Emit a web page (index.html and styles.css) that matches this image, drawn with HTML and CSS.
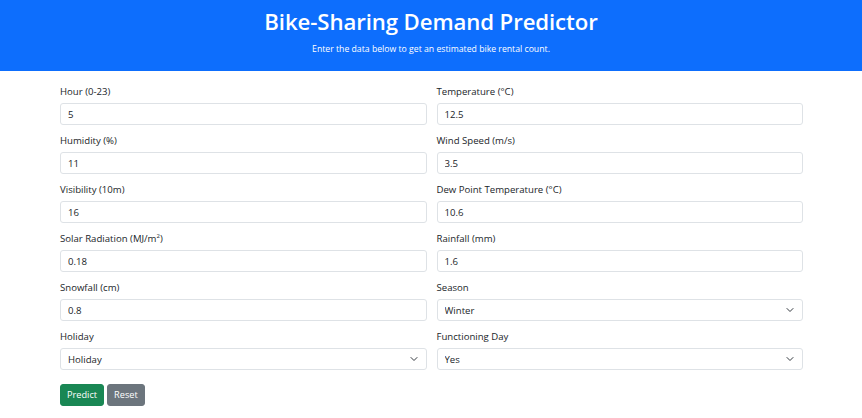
FILE: index.html
```html
<!DOCTYPE html>
<html lang="en">
<head>
<meta charset="utf-8">
<title>Bike-Sharing Demand Predictor</title>
<link rel="stylesheet" href="styles.css">
</head>
<body>
<header class="hero">
  <h1 class="hero-title">Bike-Sharing Demand Predictor</h1>
  <p class="hero-sub">Enter the data below to get an estimated bike rental count.</p>
</header>
<main class="container">
  <form class="form-grid">
    <div class="field"><label class="field-label">Hour (0-23)</label><input class="control" type="text" value="5"></div>
    <div class="field"><label class="field-label">Temperature (°C)</label><input class="control" type="text" value="12.5"></div>
    <div class="field"><label class="field-label">Humidity (%)</label><input class="control" type="text" value="11"></div>
    <div class="field"><label class="field-label">Wind Speed (m/s)</label><input class="control" type="text" value="3.5"></div>
    <div class="field"><label class="field-label">Visibility (10m)</label><input class="control" type="text" value="16"></div>
    <div class="field"><label class="field-label">Dew Point Temperature (°C)</label><input class="control" type="text" value="10.6"></div>
    <div class="field"><label class="field-label">Solar Radiation (MJ/m<sup class="sup">2</sup>)</label><input class="control" type="text" value="0.18"></div>
    <div class="field"><label class="field-label">Rainfall (mm)</label><input class="control" type="text" value="1.6"></div>
    <div class="field"><label class="field-label">Snowfall (cm)</label><input class="control" type="text" value="0.8"></div>
    <div class="field"><label class="field-label">Season</label>
      <div class="select-wrap"><select class="control select"><option>Winter</option><option>Spring</option><option>Summer</option><option>Autumn</option></select>
      <svg class="chev" viewBox="0 0 16 16" width="8" height="8"><path d="M2 5l6 6 6-6" fill="none" stroke="#343a40" stroke-width="2" stroke-linecap="round" stroke-linejoin="round"/></svg></div>
    </div>
    <div class="field"><label class="field-label">Holiday</label>
      <div class="select-wrap"><select class="control select"><option>Holiday</option><option>No Holiday</option></select>
      <svg class="chev" viewBox="0 0 16 16" width="8" height="8"><path d="M2 5l6 6 6-6" fill="none" stroke="#343a40" stroke-width="2" stroke-linecap="round" stroke-linejoin="round"/></svg></div>
    </div>
    <div class="field"><label class="field-label">Functioning Day</label>
      <div class="select-wrap"><select class="control select"><option>Yes</option><option>No</option></select>
      <svg class="chev" viewBox="0 0 16 16" width="8" height="8"><path d="M2 5l6 6 6-6" fill="none" stroke="#343a40" stroke-width="2" stroke-linecap="round" stroke-linejoin="round"/></svg></div>
    </div>
  </form>
  <div class="actions">
    <button class="btn btn-success" type="button">Predict</button>
    <button class="btn btn-secondary" type="button">Reset</button>
  </div>
</main>
</body>
</html>
```

FILE: styles.css
```css
* { box-sizing: border-box; }
html, body { margin: 0; padding: 0; background: #fff; }
body {
  font-family: "Open Sans", "Noto Sans", "Liberation Sans", sans-serif;
  color: #212529;
  font-size: 10px;
}
.hero {
  background: #0d6efd;
  color: #fff;
  text-align: center;
  height: 71px;
  padding-top: 7px;
}
.hero-title {
  margin: 0;
  font-size: 22.2px;
  font-weight: 600;
  line-height: 30px;
  letter-spacing: -0.1px;
}
.hero-sub {
  margin: 5px 0 0;
  font-size: 8.7px;
  line-height: 14px;
}
.container {
  width: 743px;
  margin: 0 0 0 calc(50% - 371px);
  padding-top: 14px;
}
.form-grid {
  display: grid;
  grid-template-columns: 1fr 1fr;
  column-gap: 10px;
  margin: 0;
}
.field {
  display: flex;
  flex-direction: column;
  margin-bottom: 9px;
}
.field-label {
  font-size: 9.6px;
  line-height: 14px;
  margin-bottom: 4px;
  color: #212529;
}
.sup { font-size: 6px; line-height: 0; vertical-align: 4px; }
.control {
  display: block;
  width: 100%;
  height: 22px;
  padding: 0 7px;
  font-family: inherit;
  font-size: 9.6px;
  color: #212529;
  background: #fff;
  border: 1px solid #dee2e6;
  border-radius: 3px;
  outline: none;
}
.select-wrap { position: relative; }
.select {
  appearance: none;
  -webkit-appearance: none;
  padding-right: 24px;
}
.chev {
  position: absolute;
  right: 9px;
  top: 7px;
  pointer-events: none;
}
.actions {
  display: flex;
  gap: 3px;
  padding-top: 5px;
}
.btn {
  font-family: inherit;
  font-size: 9.2px;
  color: #fff;
  height: 22px;
  padding: 0 6px;
  border: 1px solid transparent;
  border-radius: 3px;
  line-height: 20px;
}
.btn-success { background: #198754; border-color: #198754; }
.btn-secondary { background: #6c757d; border-color: #6c757d; }
```
